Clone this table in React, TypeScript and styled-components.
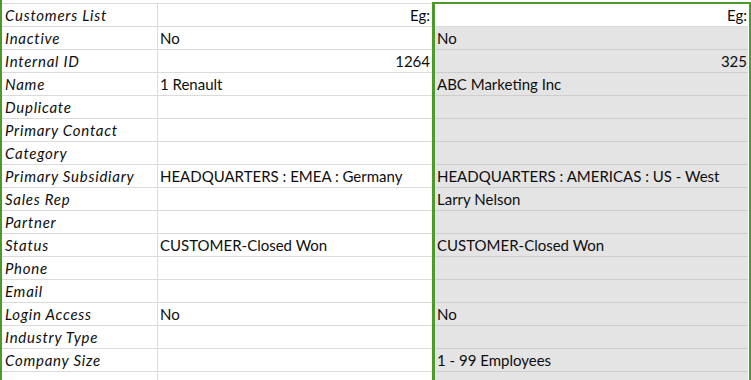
import React from 'react';
import styled, { createGlobalStyle } from 'styled-components';

const GlobalStyle = createGlobalStyle`
  html, body {
    margin: 0;
    padding: 0;
    background: #ffffff;
  }
`;

const green = '#4b9a2c';

type Align = 'left' | 'right';

interface Record {
  label: string;
  first?: string;
  second?: string;
  align?: Align;
}

const records: Record[] = [
  { label: 'Customers List', first: 'Eg:', second: 'Eg:', align: 'right' },
  { label: 'Inactive', first: 'No', second: 'No' },
  { label: 'Internal ID', first: '1264', second: '325', align: 'right' },
  { label: 'Name', first: '1 Renault', second: 'ABC Marketing Inc' },
  { label: 'Duplicate' },
  { label: 'Primary Contact' },
  { label: 'Category' },
  {
    label: 'Primary Subsidiary',
    first: 'HEADQUARTERS : EMEA : Germany',
    second: 'HEADQUARTERS : AMERICAS : US - West',
  },
  { label: 'Sales Rep', second: 'Larry Nelson' },
  { label: 'Partner' },
  { label: 'Status', first: 'CUSTOMER-Closed Won', second: 'CUSTOMER-Closed Won' },
  { label: 'Phone' },
  { label: 'Email' },
  { label: 'Login Access', first: 'No', second: 'No' },
  { label: 'Industry Type' },
  { label: 'Company Size', second: '1 - 99 Employees' },
  { label: '' },
];

const Sheet = styled.div`
  position: relative;
  width: 751px;
  height: 380px;
  overflow: hidden;
  box-sizing: border-box;
  border-left: 2px solid ${green};
  background: #ffffff;
  font-family: Lato, 'Open Sans', sans-serif;
  font-size: 15px;
  color: #0e0e0e;
`;

const Row = styled.div`
  display: grid;
  grid-template-columns: 156px 274px 319px;
`;

const Strip = styled.div`
  height: 3px;
  border-bottom: 1px solid #dadada;
`;

const Cell = styled.div<{ $align?: Align; $shaded?: boolean }>`
  box-sizing: border-box;
  height: 23px;
  line-height: 22px;
  padding: 0 ${(p) => (p.$align === 'right' ? 2 : 0)}px 0 2px;
  border-bottom: 1px solid ${(p) => (p.$shaded ? '#cdcdcd' : '#dadada')};
  background: ${(p) => (p.$shaded ? '#e4e4e4' : '#ffffff')};
  text-align: ${(p) => p.$align ?? 'left'};
  white-space: nowrap;
  overflow: hidden;
`;

const LabelCell = styled(Cell)`
  padding-left: 3px;
  border-right: 1px solid #dadada;
  font-style: italic;
  letter-spacing: 0.75px;
`;

const CompareCell = styled(Cell)`
  padding-left: 5px;
  padding-right: ${(p) => (p.$align === 'right' ? 4 : 0)}px;
`;

// selection rectangle drawn over the compared column
const Selection = styled.div`
  position: absolute;
  top: 2px;
  left: 430px;
  width: 319px;
  height: 400px;
  box-sizing: border-box;
  border: 2px solid ${green};
  border-left-width: 3px;
  box-shadow: inset -1px 0 0 #ffffff;
  pointer-events: none;
`;

export default function App() {
  return (
    <>
      <GlobalStyle />
      <Sheet>
        <Row>
          <Strip />
          <Strip />
          <Strip />
        </Row>
        {records.map((r, i) => (
          <Row key={i}>
            <LabelCell>{r.label}</LabelCell>
            <Cell $align={r.align}>{r.first}</Cell>
            <CompareCell $align={r.align} $shaded={i > 0}>
              {r.second}
            </CompareCell>
          </Row>
        ))}
        <Selection />
      </Sheet>
    </>
  );
}
